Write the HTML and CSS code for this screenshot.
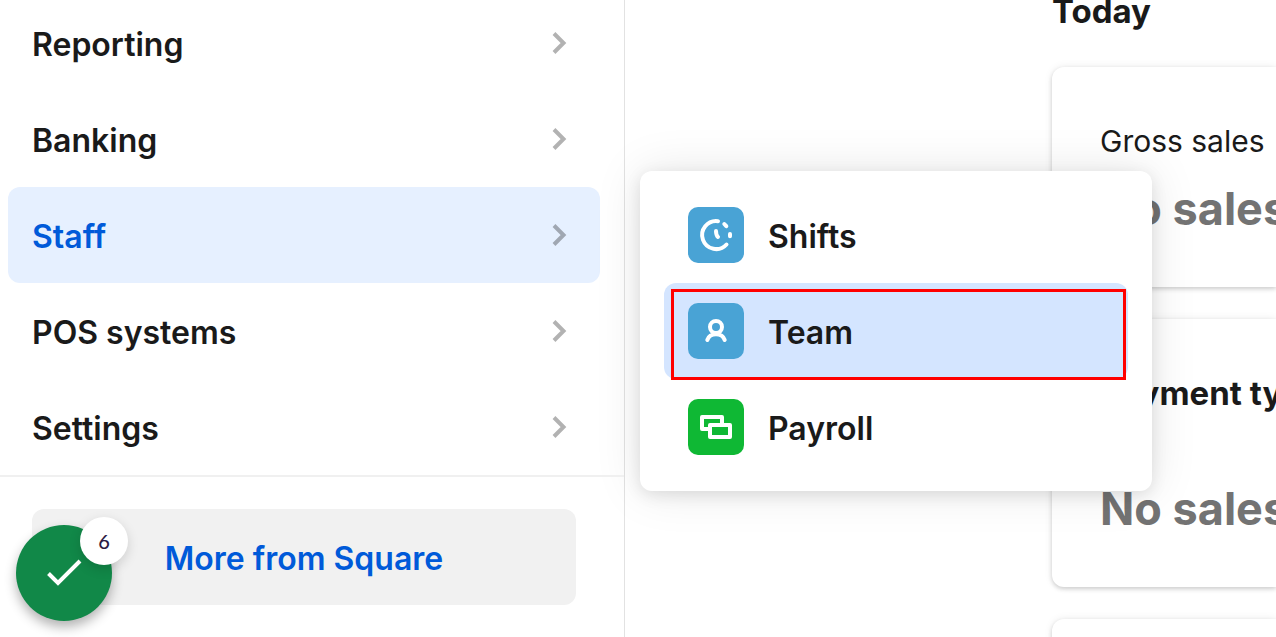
FILE: index.html
```html
<!DOCTYPE html>
<html lang="en">
<head>
<meta charset="utf-8">
<title>Dashboard</title>
<meta name="viewport" content="width=device-width, initial-scale=1">
<link rel="stylesheet" href="styles.css">
</head>
<body>
<div class="app">
  <aside class="sidebar">
    <nav class="nav" aria-label="Main">
      <a class="nav-item" href="#"><span class="label">Reporting</span><svg class="chevron" viewBox="0 0 16 24" aria-hidden="true"><path d="M2 2.500 11.500 12 2 21.500"/></svg></a>
      <a class="nav-item" href="#"><span class="label">Banking</span><svg class="chevron" viewBox="0 0 16 24" aria-hidden="true"><path d="M2 2.500 11.500 12 2 21.500"/></svg></a>
      <div class="nav-group">
        <a class="nav-item nav-item-active" href="#"><span class="label">Staff</span><svg class="chevron" viewBox="0 0 16 24" aria-hidden="true"><path d="M2 2.500 11.500 12 2 21.500"/></svg></a>
        <div class="flyout">
          <a class="flyout-item" href="#">
            <svg class="app-icon app-icon-blue" viewBox="0 0 56 56" aria-hidden="true"><path d="M30 14.200A14 14 0 1 0 38.500 37.500M36.300 17l2 2.200M42 27v2.200M28 24c0 3.500.3 4.500 2 6"/></svg>
            <span class="label">Shifts</span>
          </a>
          <a class="flyout-item flyout-item-current" href="#">
            <svg class="app-icon app-icon-blue" viewBox="0 0 56 56" aria-hidden="true"><circle cx="28" cy="24" r="6"/><path d="M19.300 37c1.200-3.500 4.500-5.700 8.700-5.700s7.500 2.200 8.700 5.700"/></svg>
            <span class="label">Team</span>
          </a>
          <a class="flyout-item" href="#">
            <svg class="app-icon app-icon-green" viewBox="0 0 56 56" aria-hidden="true"><path d="M20 30h-6V18h20v6M22 26h20v12H22z"/></svg>
            <span class="label">Payroll</span>
          </a>
        </div>
      </div>
      <a class="nav-item" href="#"><span class="label">POS systems</span><svg class="chevron" viewBox="0 0 16 24" aria-hidden="true"><path d="M2 2.500 11.500 12 2 21.500"/></svg></a>
      <a class="nav-item" href="#"><span class="label">Settings</span><svg class="chevron" viewBox="0 0 16 24" aria-hidden="true"><path d="M2 2.500 11.500 12 2 21.500"/></svg></a>
    </nav>
    <div class="sidebar-footer">
      <button class="more-button" type="button"><span class="label">More from Square</span></button>
      <button class="setup-button" type="button" aria-label="Setup guide, 6 steps left">
        <svg class="check" viewBox="0 0 40 32" aria-hidden="true"><path d="M4.500 16.500 14 26 36 4"/></svg>
        <span class="setup-count">6</span>
      </button>
    </div>
  </aside>
  <main class="main">
    <h1 class="page-title">Today</h1>
    <section class="card">
      <p class="metric-label">Gross sales</p>
      <p class="metric-value">No sales</p>
    </section>
    <section class="card">
      <h2 class="card-title">Payment types</h2>
      <p class="metric-value">No sales</p>
    </section>
    <section class="card card-empty"></section>
  </main>
</div>
</body>
</html>
```

FILE: styles.css
```css
* {
  box-sizing: border-box;
}

body {
  margin: 0;
  background: #fff;
  color: #1a1a1a;
  font-family: Inter, "Liberation Sans", sans-serif;
  font-size: 32px;
  line-height: 48px;
}

h1, h2, p {
  margin: 0;
}

a {
  color: inherit;
  text-decoration: none;
}

button {
  border: 0;
  font: inherit;
  cursor: pointer;
}

.app {
  display: flex;
  height: 100vh;
  overflow: hidden;
}

.sidebar {
  position: relative;
  z-index: 1;
  flex: 0 0 625px;
  border-right: 1px solid #e2e2e2;
}

/* The list rests slightly scrolled under the top edge. */
.nav {
  margin-top: -5px;
  padding: 0 24px 0 8px;
}

.nav-item {
  display: flex;
  align-items: center;
  justify-content: space-between;
  height: 96px;
  padding: 0 32px 0 24px;
  border-radius: 12px;
  font-weight: 600;
}

.label {
  display: block;
  padding-top: 3px;
}

.nav-item-active {
  background: #e6f0ff;
  color: #005ad9;
}

.chevron {
  width: 16px;
  height: 24px;
  fill: none;
  stroke: #000;
  stroke-opacity: 0.3;
  stroke-width: 4;
}

.nav-group {
  position: relative;
}

.flyout {
  position: absolute;
  top: -16px;
  left: 632px;
  width: 512px;
  padding: 16px 24px;
  border-radius: 12px;
  background: #fff;
  box-shadow: 0 4px 16px rgba(0, 0, 0, 0.1), 0 0 48px rgba(0, 0, 0, 0.1);
}

.flyout-item {
  position: relative;
  display: flex;
  align-items: center;
  gap: 24px;
  height: 96px;
  padding: 0 24px;
  border-radius: 12px;
  font-weight: 600;
}

.flyout-item-current {
  background: #d4e5ff;
}

.flyout-item-current::after {
  content: "";
  position: absolute;
  inset: 6px 2px -1px 7px;
  border: 3px solid #f00;
}

.app-icon {
  width: 56px;
  height: 56px;
  border-radius: 10px;
  fill: none;
  stroke: #fff;
  stroke-width: 4;
  stroke-linecap: round;
  stroke-linejoin: round;
}

.app-icon-blue {
  background: #49a3d5;
}

.app-icon-green {
  background: #0fb834;
}

.sidebar-footer {
  position: relative;
  padding: 32px 48px 32px 32px;
  border-top: 2px solid #f0f0f0;
}

.more-button {
  width: 100%;
  height: 96px;
  border-radius: 12px;
  background: #f1f1f1;
  color: #005ad9;
  font-weight: 600;
}

.setup-button {
  position: absolute;
  top: 48px;
  left: 16px;
  display: grid;
  place-items: center;
  width: 96px;
  height: 96px;
  padding: 0;
  border-radius: 50%;
  background: #118848;
  box-shadow: 0 6px 12px rgba(0, 0, 0, 0.3);
}

.check {
  width: 40px;
  height: 32px;
  fill: none;
  stroke: #fff;
  stroke-width: 4;
}

.setup-count {
  position: absolute;
  top: -8px;
  right: -16px;
  width: 48px;
  border-radius: 50%;
  background: #fff;
  box-shadow: 0 4px 12px rgba(0, 0, 0, 0.15);
  color: #2d1b44;
  font-family: Lato, sans-serif;
  font-size: 20px;
  font-weight: 500;
}

.main {
  flex: 1;
  display: flex;
  flex-direction: column;
  gap: 32px;
  min-width: 0;
  margin-top: -13px;
  padding-left: 427px;
}

.page-title, .card-title {
  font-size: 33px;
  font-weight: 700;
  white-space: nowrap;
}

.card {
  flex: none;
  padding: 50px 48px 46px;
  border-radius: 12px 0 0 12px;
  background: #fff;
  box-shadow: 0 2px 4px rgba(0, 0, 0, 0.16), 0 0 8px rgba(0, 0, 0, 0.08);
  white-space: nowrap;
}

.card-empty {
  min-height: 220px;
}

.metric-label {
  padding-bottom: 12px;
  font-size: 30px;
}

.metric-value {
  color: #737373;
  font-size: 45px;
  font-weight: 700;
  line-height: 64px;
}

.card-title {
  margin-bottom: 60px;
}
```
